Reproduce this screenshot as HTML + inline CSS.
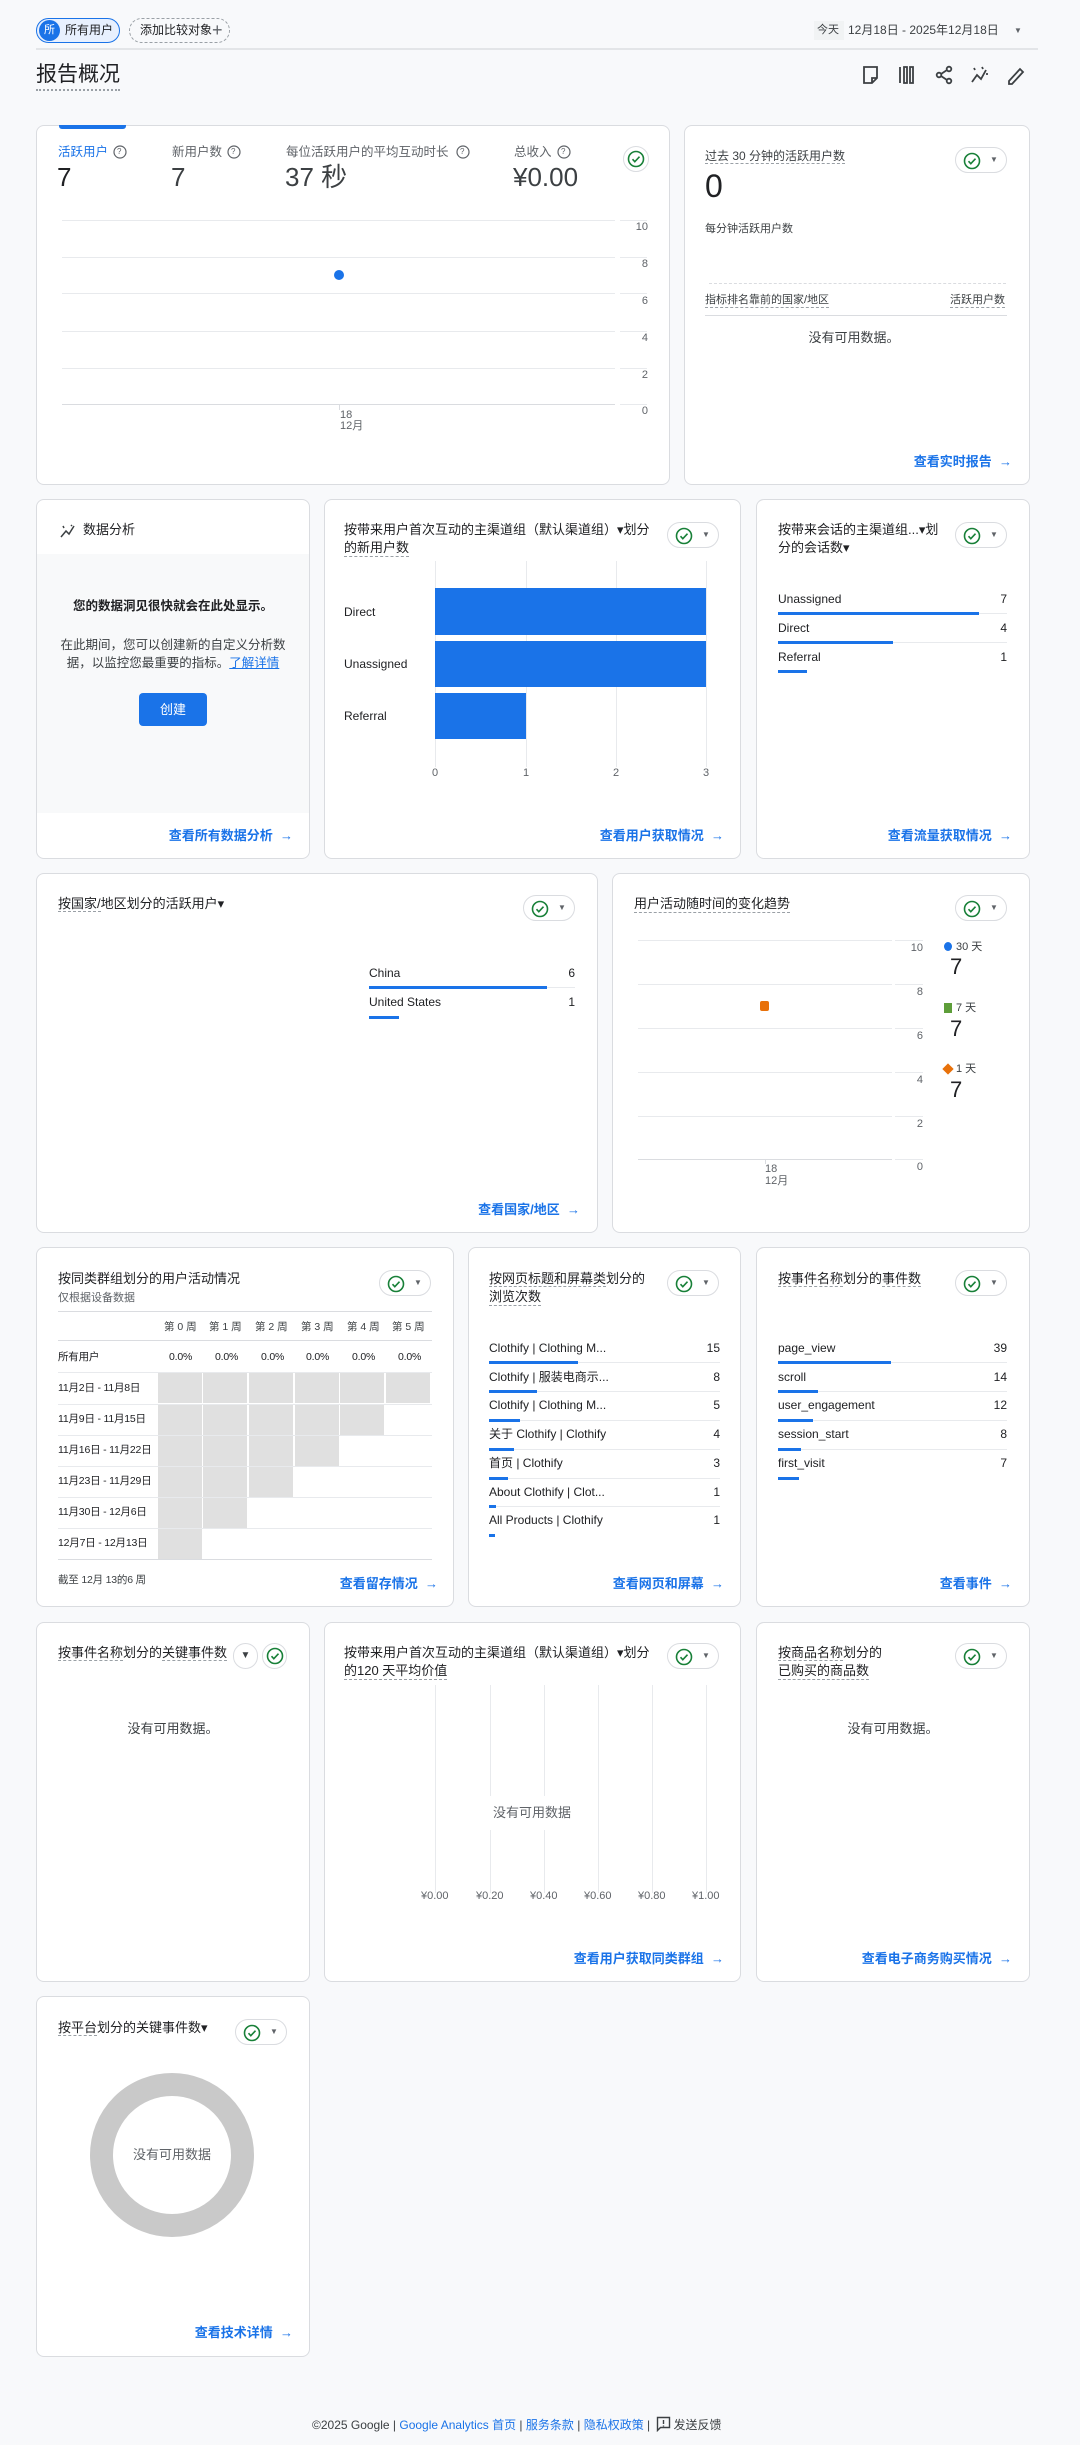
<!DOCTYPE html>
<html><head><meta charset="utf-8">
<style>
*{box-sizing:border-box;margin:0;padding:0}
body{width:1080px;height:2445px;background:#f8f9fb;font-family:"Liberation Sans","Noto Sans CJK SC",sans-serif;color:#202124;position:relative;overflow:hidden}
.a{position:absolute}
.t{position:absolute;white-space:nowrap;font-size:13px;line-height:16px;color:#202124}
.s{font-size:12px;line-height:14px}
.g{color:#5f6368}
.card{position:absolute;background:#fff;border:1px solid #dadce0;border-radius:8px}
.ln{position:absolute;height:1px;background:#e8eaed}
.vl{position:absolute;width:1px;background:#e8eaed}
.blue{color:#1a73e8}
.link{position:absolute;white-space:nowrap;font-size:13px;line-height:16px;color:#1a73e8;font-weight:bold;text-align:right}
.pill{position:absolute;width:52px;height:26px;border:1px solid #dadce0;border-radius:13px;background:#fff}
.pill svg{position:absolute;left:7px;top:4px}
.pill i{position:absolute;left:34px;top:7px;font-style:normal;font-size:8px;color:#5f6368}
.bar{position:absolute;height:3px;background:#1a73e8}
.dl{border-bottom:1px dashed #9aa0a6}
.ax{position:absolute;font-size:11px;line-height:12px;color:#5f6368;white-space:nowrap}
.rl{position:absolute;font-size:10.5px;line-height:12px;color:#202124;white-space:nowrap;letter-spacing:-0.2px}
.cell{position:absolute;width:44px;height:30px;background:#e0e0e0}
.kl{position:absolute;white-space:nowrap;font-size:12.5px;line-height:16px;color:#5f6368}
</style></head><body>

<!-- header -->
<div class="a" style="left:36px;top:18px;width:84px;height:25px;border:1px solid #1a73e8;border-radius:13px;background:#e8f0fe"></div>
<div class="a" style="left:39px;top:20px;width:21px;height:21px;border-radius:50%;background:#1a73e8;color:#fff;font-size:11px;line-height:21px;text-align:center">所</div>
<div class="t s" style="left:65px;top:23px">所有用户</div>
<div class="a" style="left:129px;top:18px;width:101px;height:25px;border:1px dashed #9aa0a6;border-radius:13px"></div>
<div class="t s" style="left:140px;top:23px">添加比较对象</div>
<div class="t" style="left:212px;top:20px;font-size:18px;line-height:20px;color:#5f6368">+</div>
<div class="a" style="left:814px;top:21px;width:30px;height:19px;background:#f1f3f4"></div>
<div class="t s" style="left:817px;top:23px;font-size:11px;color:#3c4043">今天</div>
<div class="t s" style="left:848px;top:23px;color:#3c4043">12月18日 - 2025年12月18日</div>
<div class="t" style="left:1014px;top:23px;font-size:8px;color:#5f6368">▼</div>
<div class="a" style="left:36px;top:48px;width:1002px;height:2px;background:#e3e5e8"></div>
<div class="t" style="left:36px;top:63px;font-size:21px;line-height:24px;padding-bottom:2px;border-bottom:2px dotted #9aa0a6">报告概况</div>
<svg class="a" style="left:860px;top:64px" width="170" height="22" viewBox="0 0 170 22" fill="none" stroke="#3c4043" stroke-width="1.8">
<path d="M4 3h13v11l-5 5H4z M12 19v-5h5"/>
<path d="M40 3v16 M44 3h3v16h-3z M50 3h3v16h-3z" />
<circle cx="89" cy="5" r="2.3"/><circle cx="79" cy="11" r="2.3"/><circle cx="89" cy="17" r="2.3"/><path d="M81 10l6-4 M81 12l6 4"/>
<path d="M112 18l5-7 4 4 5-9 M122 3l1 2 M126 10l2 0 M114 4l1 2"/>
<path d="M149 17l11-12 3 3-11 12h-3z"/>
</svg>

<!-- row1 card1 -->
<div class="card" style="left:36px;top:125px;width:634px;height:360px"></div>
<div class="a" style="left:59px;top:125px;width:67px;height:4px;background:#1a73e8;border-radius:0 0 3px 3px"></div>
<div class="kl" style="left:58px;top:144px;color:#1a73e8">活跃用户</div>
<div class="kl" style="left:172px;top:144px">新用户数</div>
<div class="kl" style="left:286px;top:144px">每位活跃用户的平均互动时长</div>
<div class="kl" style="left:514px;top:144px">总收入</div>
<svg class="a" style="left:0;top:0" width="700" height="200" fill="none" stroke="#5f6368" stroke-width="1.2">
<circle cx="120" cy="152" r="6"/><circle cx="234" cy="152" r="6"/><circle cx="463" cy="152" r="6"/><circle cx="564" cy="152" r="6"/>
</svg>
<div class="t g" style="left:117px;top:147px;font-size:8px;line-height:10px">?</div>
<div class="t g" style="left:231px;top:147px;font-size:8px;line-height:10px">?</div>
<div class="t g" style="left:460px;top:147px;font-size:8px;line-height:10px">?</div>
<div class="t g" style="left:561px;top:147px;font-size:8px;line-height:10px">?</div>
<div class="t" style="left:57px;top:162px;font-size:26px;line-height:30px">7</div>
<div class="t" style="left:171px;top:162px;font-size:26px;line-height:30px;color:#3c4043">7</div>
<div class="t" style="left:285px;top:162px;font-size:26px;line-height:30px;color:#3c4043">37 秒</div>
<div class="t" style="left:513px;top:162px;font-size:26px;line-height:30px;color:#3c4043">¥0.00</div>
<div class="a" style="left:623px;top:146px;width:26px;height:26px;border-radius:50%;border:1px solid #dadce0"></div>
<svg class="a" style="left:627px;top:150px" width="18" height="18" viewBox="0 0 18 18" fill="none" stroke="#188038" stroke-width="1.6"><circle cx="9" cy="9" r="7.5"/><path d="M5.5 9.2l2.3 2.5 4.7-5"/></svg>
<div class="ln" style="left:62px;top:220px;width:553px"></div><div class="ln" style="left:620px;top:220px;width:27px"></div>
<div class="ln" style="left:62px;top:257px;width:553px"></div><div class="ln" style="left:620px;top:257px;width:27px"></div>
<div class="ln" style="left:62px;top:293px;width:553px"></div><div class="ln" style="left:620px;top:293px;width:27px"></div>
<div class="ln" style="left:62px;top:331px;width:553px"></div><div class="ln" style="left:620px;top:331px;width:27px"></div>
<div class="ln" style="left:62px;top:368px;width:553px"></div><div class="ln" style="left:620px;top:368px;width:27px"></div>
<div class="ln" style="left:62px;top:404px;width:553px;background:#dadce0"></div><div class="ln" style="left:620px;top:404px;width:27px"></div>
<div class="ax" style="left:630px;width:18px;text-align:right;top:221px">10</div>
<div class="ax" style="left:630px;width:18px;text-align:right;top:258px">8</div>
<div class="ax" style="left:630px;width:18px;text-align:right;top:295px">6</div>
<div class="ax" style="left:630px;width:18px;text-align:right;top:332px">4</div>
<div class="ax" style="left:630px;width:18px;text-align:right;top:369px">2</div>
<div class="ax" style="left:630px;width:18px;text-align:right;top:405px">0</div>
<div class="a" style="left:334px;top:270px;width:10px;height:10px;border-radius:50%;background:#1a73e8"></div>
<div class="vl" style="left:339px;top:404px;height:6px;background:#dadce0"></div>
<div class="ax" style="left:340px;top:409px">18</div>
<div class="ax" style="left:340px;top:420px">12月</div>

<!-- row1 card2 -->
<div class="card" style="left:684px;top:125px;width:346px;height:360px"></div>
<div class="t s dl" style="left:705px;top:149px;color:#3c4043">过去 30 分钟的活跃用户数</div>
<div class="pill" style="left:955px;top:147px"><svg width="18" height="18" viewBox="0 0 18 18" fill="none" stroke="#188038" stroke-width="1.6"><circle cx="9" cy="9" r="7.5"/><path d="M5.5 9.2l2.3 2.5 4.7-5"/></svg><i>▼</i></div>
<div class="t" style="left:705px;top:168px;font-size:32px;line-height:36px">0</div>
<div class="t s" style="left:705px;top:222px;color:#3c4043;font-size:11px">每分钟活跃用户数</div>
<div class="a" style="left:709px;top:283px;width:297px;border-top:1px dashed #dadce0"></div>
<div class="t s dl" style="left:705px;top:293px;color:#3c4043;font-size:11px">指标排名靠前的国家/地区</div>
<div class="t s dl" style="left:950px;top:293px;color:#3c4043;font-size:11px">活跃用户数</div>
<div class="ln" style="left:705px;top:315px;width:302px;background:#dadce0"></div>
<div class="t" style="left:806px;top:330px;width:96px;text-align:center;color:#3c4043">没有可用数据。</div>
<div class="link" style="left:880px;top:454px;width:132px">查看实时报告 &nbsp;→</div>

<!-- row2 -->
<div class="card" style="left:36px;top:499px;width:274px;height:360px;overflow:hidden"><div class="a" style="left:0;top:54px;width:274px;height:259px;background:#f8f9fa"></div></div>
<svg class="a" style="left:59px;top:523px" width="18" height="16" viewBox="0 0 18 16" fill="none" stroke="#3c4043" stroke-width="1.5"><path d="M2 14l5-6 3 3 5-8 M12 2l1 1 M4 3l1 2"/></svg>
<div class="t" style="left:83px;top:522px">数据分析</div>
<div class="t" style="left:36px;top:598px;width:274px;text-align:center;font-weight:bold;font-size:12.5px">您的数据洞见很快就会在此处显示。</div>
<div class="t" style="left:36px;top:637px;width:274px;text-align:center;font-size:12.5px;color:#3c4043">在此期间，您可以创建新的自定义分析数</div>
<div class="t" style="left:36px;top:655px;width:274px;text-align:center;font-size:12.5px;color:#3c4043">据，以监控您最重要的指标。<span style="color:#1a73e8;text-decoration:underline">了解详情</span></div>
<div class="a" style="left:139px;top:693px;width:68px;height:33px;background:#1a73e8;border-radius:4px;color:#fff;font-size:13px;line-height:33px;text-align:center">创建</div>
<div class="link" style="left:140px;top:828px;width:153px">查看所有数据分析 &nbsp;→</div>

<div class="card" style="left:324px;top:499px;width:417px;height:360px"></div>
<div class="t" style="left:344px;top:522px">按带来用户首次互动的主渠道组（默认渠道组）▾划分</div>
<div class="t dl" style="left:344px;top:540px">的新用户数</div>
<div class="pill" style="left:667px;top:522px"><svg width="18" height="18" viewBox="0 0 18 18" fill="none" stroke="#188038" stroke-width="1.6"><circle cx="9" cy="9" r="7.5"/><path d="M5.5 9.2l2.3 2.5 4.7-5"/></svg><i>▼</i></div>
<div class="vl" style="left:435px;top:561px;height:206px"></div>
<div class="vl" style="left:526px;top:561px;height:206px"></div>
<div class="vl" style="left:616px;top:561px;height:206px"></div>
<div class="vl" style="left:706px;top:561px;height:206px"></div>
<div class="a" style="left:435px;top:588px;width:271px;height:47px;background:#1a73e8"></div>
<div class="a" style="left:435px;top:641px;width:271px;height:46px;background:#1a73e8"></div>
<div class="a" style="left:435px;top:693px;width:91px;height:46px;background:#1a73e8"></div>
<div class="t s" style="left:344px;top:605px">Direct</div>
<div class="t s" style="left:344px;top:657px">Unassigned</div>
<div class="t s" style="left:344px;top:709px">Referral</div>
<div class="ax" style="left:432px;top:767px">0</div>
<div class="ax" style="left:523px;top:767px">1</div>
<div class="ax" style="left:613px;top:767px">2</div>
<div class="ax" style="left:703px;top:767px">3</div>
<div class="link" style="left:560px;top:828px;width:164px">查看用户获取情况 &nbsp;→</div>

<div class="card" style="left:756px;top:499px;width:274px;height:360px"></div>
<div class="t" style="left:778px;top:522px">按带来会话的主渠道组...▾划</div>
<div class="t" style="left:778px;top:540px">分的会话数▾</div>
<div class="pill" style="left:955px;top:522px"><svg width="18" height="18" viewBox="0 0 18 18" fill="none" stroke="#188038" stroke-width="1.6"><circle cx="9" cy="9" r="7.5"/><path d="M5.5 9.2l2.3 2.5 4.7-5"/></svg><i>▼</i></div>
<div class="t s" style="left:778px;top:592px">Unassigned</div><div class="t s" style="left:990px;top:592px;width:17px;text-align:right">7</div>
<div class="ln" style="left:778px;top:613px;width:229px"></div><div class="bar" style="left:778px;top:612px;width:201px"></div>
<div class="t s" style="left:778px;top:621px">Direct</div><div class="t s" style="left:990px;top:621px;width:17px;text-align:right">4</div>
<div class="ln" style="left:778px;top:642px;width:229px"></div><div class="bar" style="left:778px;top:641px;width:115px"></div>
<div class="t s" style="left:778px;top:650px">Referral</div><div class="t s" style="left:990px;top:650px;width:17px;text-align:right">1</div>
<div class="bar" style="left:778px;top:670px;width:29px"></div>
<div class="link" style="left:850px;top:828px;width:162px">查看流量获取情况 &nbsp;→</div>

<!-- row3 -->
<div class="card" style="left:36px;top:873px;width:562px;height:360px"></div>
<div class="t" style="left:58px;top:896px"><span class="dl">按国家/</span>地区划分的活跃用户▾</div>
<div class="pill" style="left:523px;top:895px"><svg width="18" height="18" viewBox="0 0 18 18" fill="none" stroke="#188038" stroke-width="1.6"><circle cx="9" cy="9" r="7.5"/><path d="M5.5 9.2l2.3 2.5 4.7-5"/></svg><i>▼</i></div>
<div class="t s" style="left:369px;top:966px">China</div><div class="t s" style="left:560px;top:966px;width:15px;text-align:right">6</div>
<div class="ln" style="left:369px;top:987px;width:206px"></div><div class="bar" style="left:369px;top:986px;width:178px"></div>
<div class="t s" style="left:369px;top:995px">United States</div><div class="t s" style="left:560px;top:995px;width:15px;text-align:right">1</div>
<div class="bar" style="left:369px;top:1016px;width:30px"></div>
<div class="link" style="left:440px;top:1202px;width:140px">查看国家/地区 &nbsp;→</div>

<div class="card" style="left:612px;top:873px;width:418px;height:360px"></div>
<div class="t dl" style="left:634px;top:896px">用户活动随时间的变化趋势</div>
<div class="pill" style="left:955px;top:895px"><svg width="18" height="18" viewBox="0 0 18 18" fill="none" stroke="#188038" stroke-width="1.6"><circle cx="9" cy="9" r="7.5"/><path d="M5.5 9.2l2.3 2.5 4.7-5"/></svg><i>▼</i></div>
<div class="ln" style="left:638px;top:940px;width:254px"></div><div class="ln" style="left:895px;top:940px;width:28px"></div>
<div class="ln" style="left:638px;top:984px;width:254px"></div><div class="ln" style="left:895px;top:984px;width:28px"></div>
<div class="ln" style="left:638px;top:1028px;width:254px"></div><div class="ln" style="left:895px;top:1028px;width:28px"></div>
<div class="ln" style="left:638px;top:1072px;width:254px"></div><div class="ln" style="left:895px;top:1072px;width:28px"></div>
<div class="ln" style="left:638px;top:1116px;width:254px"></div><div class="ln" style="left:895px;top:1116px;width:28px"></div>
<div class="ln" style="left:638px;top:1159px;width:254px;background:#dadce0"></div><div class="ln" style="left:895px;top:1159px;width:28px"></div>
<div class="ax" style="left:905px;width:18px;text-align:right;top:942px">10</div>
<div class="ax" style="left:905px;width:18px;text-align:right;top:986px">8</div>
<div class="ax" style="left:905px;width:18px;text-align:right;top:1030px">6</div>
<div class="ax" style="left:905px;width:18px;text-align:right;top:1074px">4</div>
<div class="ax" style="left:905px;width:18px;text-align:right;top:1118px">2</div>
<div class="ax" style="left:905px;width:18px;text-align:right;top:1161px">0</div>
<div class="a" style="left:760px;top:1001px;width:9px;height:10px;border-radius:2px;background:#e8710a"></div>
<div class="vl" style="left:765px;top:1159px;height:5px;background:#dadce0"></div>
<div class="ax" style="left:765px;top:1163px">18</div>
<div class="ax" style="left:765px;top:1175px">12月</div>
<div class="a" style="left:944px;top:942px;width:8px;height:9px;border-radius:50%;background:#1a73e8"></div>
<div class="ax" style="left:956px;top:941px;color:#3c4043">30 天</div>
<div class="t" style="left:950px;top:954px;font-size:22px;line-height:26px">7</div>
<div class="a" style="left:944px;top:1003px;width:8px;height:10px;background:#5e9e3a"></div>
<div class="ax" style="left:956px;top:1002px;color:#3c4043">7 天</div>
<div class="t" style="left:950px;top:1016px;font-size:22px;line-height:26px">7</div>
<div class="a" style="left:944px;top:1065px;width:8px;height:8px;background:#e8710a;transform:rotate(45deg)"></div>
<div class="ax" style="left:956px;top:1063px;color:#3c4043">1 天</div>
<div class="t" style="left:950px;top:1077px;font-size:22px;line-height:26px">7</div>

<!-- row4 -->
<div class="card" style="left:36px;top:1247px;width:418px;height:360px"></div>
<div class="t" style="left:58px;top:1271px">按同类群组划分的用户活动情况</div>
<div class="t s g" style="left:58px;top:1291px;font-size:11px">仅根据设备数据</div>
<div class="pill" style="left:379px;top:1270px"><svg width="18" height="18" viewBox="0 0 18 18" fill="none" stroke="#188038" stroke-width="1.6"><circle cx="9" cy="9" r="7.5"/><path d="M5.5 9.2l2.3 2.5 4.7-5"/></svg><i>▼</i></div>
<div class="ln" style="left:58px;top:1311px;width:374px;background:#dadce0"></div>
<div class="ax" style="left:164px;top:1321px;color:#3c4043;font-size:10.5px">第 0 周</div>
<div class="ax" style="left:209px;top:1321px;color:#3c4043;font-size:10.5px">第 1 周</div>
<div class="ax" style="left:255px;top:1321px;color:#3c4043;font-size:10.5px">第 2 周</div>
<div class="ax" style="left:301px;top:1321px;color:#3c4043;font-size:10.5px">第 3 周</div>
<div class="ax" style="left:347px;top:1321px;color:#3c4043;font-size:10.5px">第 4 周</div>
<div class="ax" style="left:392px;top:1321px;color:#3c4043;font-size:10.5px">第 5 周</div>
<div class="ln" style="left:58px;top:1340px;width:374px;background:#dadce0"></div>
<div class="rl" style="left:58px;top:1351px">所有用户</div>
<div class="rl" style="left:169px;top:1351px">0.0%</div>
<div class="rl" style="left:215px;top:1351px">0.0%</div>
<div class="rl" style="left:261px;top:1351px">0.0%</div>
<div class="rl" style="left:306px;top:1351px">0.0%</div>
<div class="rl" style="left:352px;top:1351px">0.0%</div>
<div class="rl" style="left:398px;top:1351px">0.0%</div>
<div class="ln" style="left:58px;top:1372px;width:374px"></div>
<div class="ln" style="left:58px;top:1404px;width:374px"></div>
<div class="ln" style="left:58px;top:1435px;width:374px"></div>
<div class="ln" style="left:58px;top:1466px;width:374px"></div>
<div class="ln" style="left:58px;top:1497px;width:374px"></div>
<div class="ln" style="left:58px;top:1528px;width:374px"></div>
<div class="ln" style="left:58px;top:1559px;width:374px;background:#dadce0"></div>
<div class="rl" style="left:58px;top:1382px">11月2日 - 11月8日</div>
<div class="rl" style="left:58px;top:1413px">11月9日 - 11月15日</div>
<div class="rl" style="left:58px;top:1444px">11月16日 - 11月22日</div>
<div class="rl" style="left:58px;top:1475px">11月23日 - 11月29日</div>
<div class="rl" style="left:58px;top:1506px">11月30日 - 12月6日</div>
<div class="rl" style="left:58px;top:1537px">12月7日 - 12月13日</div>
<div class="cell" style="left:158px;top:1373px"></div><div class="cell" style="left:203px;top:1373px"></div><div class="cell" style="left:249px;top:1373px"></div><div class="cell" style="left:295px;top:1373px"></div><div class="cell" style="left:340px;top:1373px"></div><div class="cell" style="left:386px;top:1373px"></div>
<div class="cell" style="left:158px;top:1405px"></div><div class="cell" style="left:203px;top:1405px"></div><div class="cell" style="left:249px;top:1405px"></div><div class="cell" style="left:295px;top:1405px"></div><div class="cell" style="left:340px;top:1405px"></div>
<div class="cell" style="left:158px;top:1436px"></div><div class="cell" style="left:203px;top:1436px"></div><div class="cell" style="left:249px;top:1436px"></div><div class="cell" style="left:295px;top:1436px"></div>
<div class="cell" style="left:158px;top:1467px"></div><div class="cell" style="left:203px;top:1467px"></div><div class="cell" style="left:249px;top:1467px"></div>
<div class="cell" style="left:158px;top:1498px"></div><div class="cell" style="left:203px;top:1498px"></div>
<div class="cell" style="left:158px;top:1529px"></div>
<div class="rl" style="left:58px;top:1574px;color:#3c4043">截至 12月 13的6 周</div>
<div class="link" style="left:300px;top:1576px;width:138px">查看留存情况 &nbsp;→</div>

<div class="card" style="left:468px;top:1247px;width:273px;height:360px"></div>
<div class="t" style="left:489px;top:1271px"><span class="dl">按网页标题和屏幕类</span>划分的</div>
<div class="t dl" style="left:489px;top:1289px">浏览次数</div>
<div class="pill" style="left:667px;top:1270px"><svg width="18" height="18" viewBox="0 0 18 18" fill="none" stroke="#188038" stroke-width="1.6"><circle cx="9" cy="9" r="7.5"/><path d="M5.5 9.2l2.3 2.5 4.7-5"/></svg><i>▼</i></div>
<div class="t s" style="left:489px;top:1341px">Clothify | Clothing M...</div><div class="t s" style="left:690px;top:1341px;width:30px;text-align:right">15</div>
<div class="ln" style="left:489px;top:1362px;width:231px"></div><div class="bar" style="left:489px;top:1361px;width:89px"></div>
<div class="t s" style="left:489px;top:1370px">Clothify | 服装电商示...</div><div class="t s" style="left:690px;top:1370px;width:30px;text-align:right">8</div>
<div class="ln" style="left:489px;top:1391px;width:231px"></div><div class="bar" style="left:489px;top:1390px;width:48px"></div>
<div class="t s" style="left:489px;top:1398px">Clothify | Clothing M...</div><div class="t s" style="left:690px;top:1398px;width:30px;text-align:right">5</div>
<div class="ln" style="left:489px;top:1420px;width:231px"></div><div class="bar" style="left:489px;top:1419px;width:31px"></div>
<div class="t s" style="left:489px;top:1427px">关于 Clothify | Clothify</div><div class="t s" style="left:690px;top:1427px;width:30px;text-align:right">4</div>
<div class="ln" style="left:489px;top:1449px;width:231px"></div><div class="bar" style="left:489px;top:1448px;width:25px"></div>
<div class="t s" style="left:489px;top:1456px">首页 | Clothify</div><div class="t s" style="left:690px;top:1456px;width:30px;text-align:right">3</div>
<div class="ln" style="left:489px;top:1478px;width:231px"></div><div class="bar" style="left:489px;top:1477px;width:19px"></div>
<div class="t s" style="left:489px;top:1485px">About Clothify | Clot...</div><div class="t s" style="left:690px;top:1485px;width:30px;text-align:right">1</div>
<div class="ln" style="left:489px;top:1506px;width:231px"></div><div class="bar" style="left:489px;top:1505px;width:7px"></div>
<div class="t s" style="left:489px;top:1513px">All Products | Clothify</div><div class="t s" style="left:690px;top:1513px;width:30px;text-align:right">1</div>
<div class="bar" style="left:489px;top:1534px;width:6px"></div>
<div class="link" style="left:580px;top:1576px;width:144px">查看网页和屏幕 &nbsp;→</div>

<div class="card" style="left:756px;top:1247px;width:274px;height:360px"></div>
<div class="t" style="left:778px;top:1271px"><span class="dl">按事件名称</span>划分的<span class="dl">事件数</span></div>
<div class="pill" style="left:955px;top:1270px"><svg width="18" height="18" viewBox="0 0 18 18" fill="none" stroke="#188038" stroke-width="1.6"><circle cx="9" cy="9" r="7.5"/><path d="M5.5 9.2l2.3 2.5 4.7-5"/></svg><i>▼</i></div>
<div class="t s" style="left:778px;top:1341px">page_view</div><div class="t s" style="left:977px;top:1341px;width:30px;text-align:right">39</div>
<div class="ln" style="left:778px;top:1362px;width:229px"></div><div class="bar" style="left:778px;top:1361px;width:113px"></div>
<div class="t s" style="left:778px;top:1370px">scroll</div><div class="t s" style="left:977px;top:1370px;width:30px;text-align:right">14</div>
<div class="ln" style="left:778px;top:1391px;width:229px"></div><div class="bar" style="left:778px;top:1390px;width:40px"></div>
<div class="t s" style="left:778px;top:1398px">user_engagement</div><div class="t s" style="left:977px;top:1398px;width:30px;text-align:right">12</div>
<div class="ln" style="left:778px;top:1420px;width:229px"></div><div class="bar" style="left:778px;top:1419px;width:35px"></div>
<div class="t s" style="left:778px;top:1427px">session_start</div><div class="t s" style="left:977px;top:1427px;width:30px;text-align:right">8</div>
<div class="ln" style="left:778px;top:1449px;width:229px"></div><div class="bar" style="left:778px;top:1448px;width:23px"></div>
<div class="t s" style="left:778px;top:1456px">first_visit</div><div class="t s" style="left:977px;top:1456px;width:30px;text-align:right">7</div>
<div class="bar" style="left:778px;top:1477px;width:21px"></div>
<div class="link" style="left:900px;top:1576px;width:112px">查看事件 &nbsp;→</div>

<!-- row5 -->
<div class="card" style="left:36px;top:1622px;width:274px;height:360px"></div>
<div class="t" style="left:58px;top:1645px"><span class="dl">按事件名称</span>划分的<span class="dl">关键事件数</span></div>
<div class="a" style="left:233px;top:1643px;width:25px;height:26px;border:1px solid #dadce0;border-radius:13px;font-size:10px;line-height:24px;text-align:center;color:#3c4043">▼</div>
<div class="a" style="left:262px;top:1643px;width:25px;height:26px;border:1px solid #dadce0;border-radius:13px"></div>
<svg class="a" style="left:266px;top:1647px" width="18" height="18" viewBox="0 0 18 18" fill="none" stroke="#188038" stroke-width="1.6"><circle cx="9" cy="9" r="7.5"/><path d="M5.5 9.2l2.3 2.5 4.7-5"/></svg>
<div class="t" style="left:36px;top:1721px;width:274px;text-align:center;color:#3c4043">没有可用数据。</div>

<div class="card" style="left:324px;top:1622px;width:417px;height:360px"></div>
<div class="t" style="left:344px;top:1645px">按带来用户首次互动的主渠道组（默认渠道组）▾划分</div>
<div class="t dl" style="left:344px;top:1663px">的120 天平均价值</div>
<div class="pill" style="left:667px;top:1643px"><svg width="18" height="18" viewBox="0 0 18 18" fill="none" stroke="#188038" stroke-width="1.6"><circle cx="9" cy="9" r="7.5"/><path d="M5.5 9.2l2.3 2.5 4.7-5"/></svg><i>▼</i></div>
<div class="vl" style="left:435px;top:1685px;height:208px"></div>
<div class="vl" style="left:490px;top:1685px;height:208px"></div>
<div class="vl" style="left:544px;top:1685px;height:208px"></div>
<div class="vl" style="left:598px;top:1685px;height:208px"></div>
<div class="vl" style="left:652px;top:1685px;height:208px"></div>
<div class="vl" style="left:706px;top:1685px;height:208px"></div>
<div class="t g" style="left:482px;top:1796px;width:100px;height:34px;background:#fff;text-align:center;line-height:34px">没有可用数据</div>
<div class="ax" style="left:421px;top:1890px">¥0.00</div>
<div class="ax" style="left:476px;top:1890px">¥0.20</div>
<div class="ax" style="left:530px;top:1890px">¥0.40</div>
<div class="ax" style="left:584px;top:1890px">¥0.60</div>
<div class="ax" style="left:638px;top:1890px">¥0.80</div>
<div class="ax" style="left:692px;top:1890px">¥1.00</div>
<div class="link" style="left:540px;top:1951px;width:184px">查看用户获取同类群组 &nbsp;→</div>

<div class="card" style="left:756px;top:1622px;width:274px;height:360px"></div>
<div class="t" style="left:778px;top:1645px"><span class="dl">按商品名称</span>划分的</div>
<div class="t dl" style="left:778px;top:1663px">已购买的商品数</div>
<div class="pill" style="left:955px;top:1643px"><svg width="18" height="18" viewBox="0 0 18 18" fill="none" stroke="#188038" stroke-width="1.6"><circle cx="9" cy="9" r="7.5"/><path d="M5.5 9.2l2.3 2.5 4.7-5"/></svg><i>▼</i></div>
<div class="t" style="left:756px;top:1721px;width:274px;text-align:center;color:#3c4043">没有可用数据。</div>
<div class="link" style="left:820px;top:1951px;width:192px">查看电子商务购买情况 &nbsp;→</div>

<!-- row6 -->
<div class="card" style="left:36px;top:1996px;width:274px;height:361px"></div>
<div class="t" style="left:58px;top:2020px"><span class="dl">按平台</span>划分的关键事件数▾</div>
<div class="pill" style="left:235px;top:2019px"><svg width="18" height="18" viewBox="0 0 18 18" fill="none" stroke="#188038" stroke-width="1.6"><circle cx="9" cy="9" r="7.5"/><path d="M5.5 9.2l2.3 2.5 4.7-5"/></svg><i>▼</i></div>
<div class="a" style="left:90px;top:2073px;width:164px;height:164px;border-radius:50%;border:23px solid #c9c9c9"></div>
<div class="t g" style="left:122px;top:2147px;width:100px;text-align:center">没有可用数据</div>
<div class="link" style="left:160px;top:2325px;width:133px">查看技术详情 &nbsp;→</div>

<!-- footer -->
<div class="t s" style="left:312px;top:2416px;color:#3c4043">©2025 Google | <span class="blue">Google Analytics 首页</span> | <span class="blue">服务条款</span> | <span class="blue">隐私权政策</span> | <svg style="display:inline-block;vertical-align:-3px;margin:0 3px 0 2px" width="15" height="16" viewBox="0 0 15 16" fill="none" stroke="#3c4043" stroke-width="1.4"><path d="M1.5 1.5h12v10h-9l-3 3z M7.5 4v4 M7.5 9.5v1"/></svg>发送反馈</div>
</body></html>
